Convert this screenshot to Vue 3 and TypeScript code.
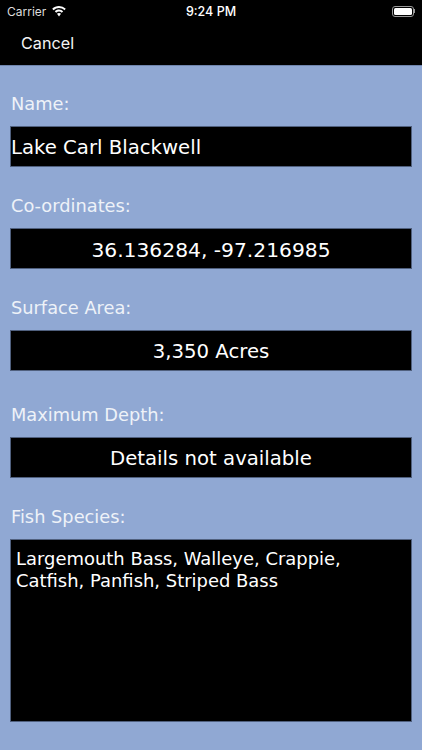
<script setup lang="ts">
interface Field {
  label: string
  value: string
  align: 'left' | 'center'
  wide?: boolean
  spaced?: boolean
}

const fields: Field[] = [
  { label: 'Name:', value: 'Lake Carl Blackwell', align: 'left' },
  { label: 'Co-ordinates:', value: '36.136284, -97.216985', align: 'center', wide: true },
  { label: 'Surface Area:', value: '3,350 Acres', align: 'center' },
  { label: 'Maximum Depth:', value: 'Details not available', align: 'center', spaced: true }
]
</script>

<template>
  <div class="screen">
    <header class="top">
      <div class="status">
        <div class="carrier">
          <span>Carrier</span>
          <svg class="wifi" viewBox="0 0 14 11" xmlns="http://www.w3.org/2000/svg">
            <path d="M7 0C4.4 0 2 1 .2 2.7l1.4 1.5A7.9 7.9 0 0 1 7 2.1c2.1 0 4 .8 5.4 2.1l1.4-1.5A10 10 0 0 0 7 0Z" fill="#fff"/>
            <path d="M7 3.5c-1.6 0-3.1.6-4.2 1.7l1.4 1.5A4 4 0 0 1 7 5.6a4 4 0 0 1 2.8 1.1l1.4-1.5A6 6 0 0 0 7 3.5Z" fill="#fff"/>
            <path d="M7 7c-.8 0-1.5.3-2 .8L7 10.6l2-2.8A2.9 2.9 0 0 0 7 7Z" fill="#fff"/>
          </svg>
        </div>
        <span class="clock">9:24 PM</span>
        <div class="battery">
          <div class="battery-body"><div class="battery-fill"></div></div>
          <div class="battery-cap"></div>
        </div>
      </div>
      <div class="nav">Cancel</div>
    </header>

    <main class="form">
      <section v-for="f in fields" :key="f.label" class="field" :class="{ spaced: f.spaced }">
        <div class="label">{{ f.label }}</div>
        <div class="box" :class="[f.align, { wide: f.wide }]">{{ f.value }}</div>
      </section>
      <section class="field">
        <div class="label">Fish Species:</div>
        <div class="box-area">Largemouth Bass, Walleye, Crappie, Catfish, Panfish, Striped Bass</div>
      </section>
    </main>
  </div>
</template>

<style>
html,
body {
  margin: 0;
  background: #90a8d3;
}
</style>

<style scoped>
.screen {
  width: 422px;
  height: 750px;
  overflow: hidden;
  background: #90a8d3;
  font-family: "DejaVu Sans", Verdana, sans-serif;
  color: #fff;
}

.top {
  height: 65px;
  background: #000;
  border-bottom: 1px solid #6f85ad;
  box-sizing: content-box;
  font-family: "Inter", "Liberation Sans", sans-serif;
}

.status {
  height: 22px;
  display: grid;
  grid-template-columns: 1fr auto 1fr;
  align-items: center;
  padding: 0 7px;
  font-size: 12px;
}

.carrier {
  display: flex;
  align-items: center;
  gap: 6px;
  color: #ddd;
}

.wifi {
  width: 14px;
  height: 11px;
}

.clock {
  font-weight: 500;
  font-size: 12.5px;
}

.battery {
  justify-self: end;
  display: flex;
  align-items: center;
}

.battery-body {
  width: 22px;
  height: 11px;
  box-sizing: border-box;
  border: 1px solid #999;
  border-radius: 3px;
  padding: 1px;
}

.battery-fill {
  height: 100%;
  background: #fff;
  border-radius: 1.5px;
}

.battery-cap {
  width: 1px;
  height: 4px;
  background: #999;
}

.nav {
  padding: 11px 0 0 21px;
  font-size: 16.2px;
  line-height: 20px;
  color: #f4f4f4;
}

.form {
  padding: 26px 10px 0;
  display: flex;
  flex-direction: column;
  gap: 27px;
}

.field {
  display: flex;
  flex-direction: column;
  gap: 10px;
}

.field.spaced {
  margin-top: 5px;
}

.label {
  height: 24px;
  line-height: 24px;
  padding-left: 1px;
  font-size: 17.8px;
  color: #eef2f8;
}

.box {
  height: 41px;
  line-height: 42px;
  box-sizing: border-box;
  background: #000;
  border: 1px solid #50607e;
  font-size: 19.7px;
  white-space: nowrap;
}

.box.wide {
  font-size: 20.25px;
}

.box.left {
  text-align: left;
}

.box.center {
  text-align: center;
}

.box-area {
  height: 183px;
  box-sizing: border-box;
  background: #000;
  border: 1px solid #50607e;
  padding: 8px 5px;
  font-size: 17.95px;
  line-height: 22px;
}
</style>
